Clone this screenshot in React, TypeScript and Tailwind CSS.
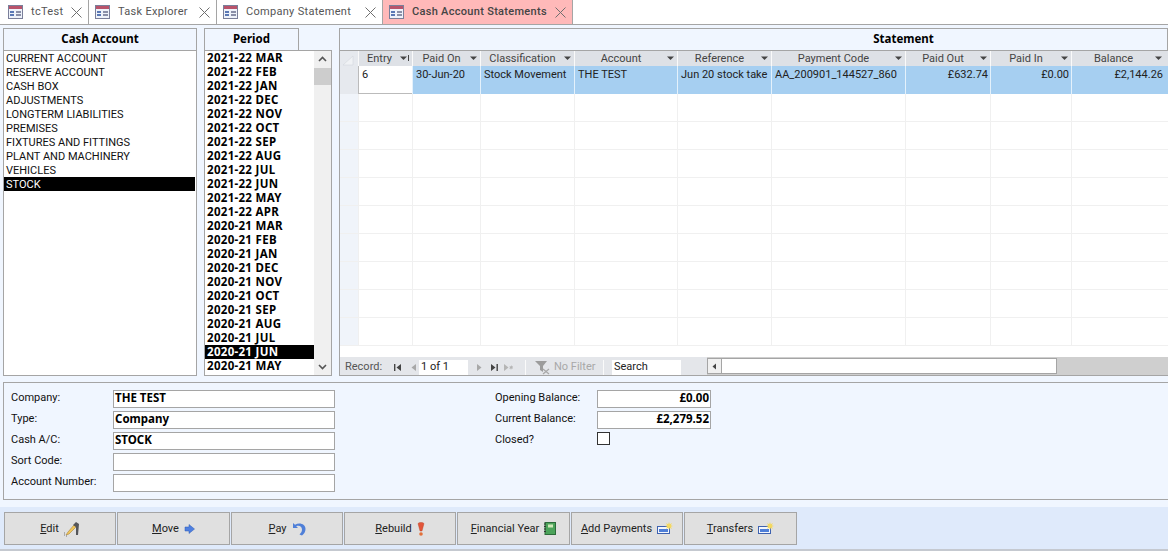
import type { ReactNode } from "react";

const ACCOUNTS = [
  "CURRENT ACCOUNT",
  "RESERVE ACCOUNT",
  "CASH BOX",
  "ADJUSTMENTS",
  "LONGTERM LIABILITIES",
  "PREMISES",
  "FIXTURES AND FITTINGS",
  "PLANT AND MACHINERY",
  "VEHICLES",
  "STOCK",
];

const PERIODS = [
  "2021-22 MAR",
  "2021-22 FEB",
  "2021-22 JAN",
  "2021-22 DEC",
  "2021-22 NOV",
  "2021-22 OCT",
  "2021-22 SEP",
  "2021-22 AUG",
  "2021-22 JUL",
  "2021-22 JUN",
  "2021-22 MAY",
  "2021-22 APR",
  "2020-21 MAR",
  "2020-21 FEB",
  "2020-21 JAN",
  "2020-21 DEC",
  "2020-21 NOV",
  "2020-21 OCT",
  "2020-21 SEP",
  "2020-21 AUG",
  "2020-21 JUL",
  "2020-21 JUN",
  "2020-21 MAY",
];

const COLUMNS = [
  { label: "Entry", width: "w-[54px]", value: "6", align: "pl-[3px]", sort: true },
  { label: "Paid On", width: "w-[68px]", value: "30-Jun-20", align: "pl-[3px]" },
  { label: "Classification", width: "w-[94px]", value: "Stock Movement", align: "pl-[3px]" },
  { label: "Account", width: "w-[103px]", value: "THE TEST", align: "pl-[3px]" },
  { label: "Reference", width: "w-[94px]", value: "Jun 20 stock take", align: "pl-[3px]" },
  { label: "Payment Code", width: "w-[134px]", value: "AA_200901_144527_860", align: "pl-[3px]" },
  { label: "Paid Out", width: "w-[85px]", value: "£632.74", align: "text-right pr-[2px]" },
  { label: "Paid In", width: "w-[81px]", value: "£0.00", align: "text-right pr-[2px]" },
  { label: "Balance", width: "w-[94px]", value: "£2,144.26", align: "text-right pr-[2px]" },
];

const BLANK_ROWS = [0, 1, 2, 3, 4, 5, 6, 7, 8];

function FormIcon() {
  return (
    <svg width="15" height="14" viewBox="0 0 15 14" className="shrink-0">
      <rect x="0.5" y="0.5" width="14" height="13" fill="#eef2fa" stroke="#7a7f9a" />
      <rect x="1" y="1" width="13" height="3" fill="#b9536b" />
      <rect x="2" y="6" width="4" height="2" fill="#5a78b5" />
      <rect x="2" y="9" width="4" height="2" fill="#5a78b5" />
      <rect x="8" y="6" width="5" height="2" fill="#8a8fa8" />
      <rect x="8" y="9" width="5" height="2" fill="#8a8fa8" />
    </svg>
  );
}

function CloseIcon() {
  return (
    <svg width="11" height="11" viewBox="0 0 11 11" className="shrink-0">
      <path d="M0.5 0.5 L10.5 10.5 M10.5 0.5 L0.5 10.5" stroke="#6f6f6f" strokeWidth="1" fill="none" />
    </svg>
  );
}

function Tab({ label, width, active }: { label: string; width: string; active?: boolean }) {
  return (
    <div
      className={`${width} flex h-[24px] items-center border-r border-[#a5a5a5] pl-[6px] text-[11px] tracking-[0.3px] ${
        active ? "bg-[#ffb9b9] font-medium text-[#444]" : "bg-white text-[#555]"
      }`}
    >
      <FormIcon />
      <span className="ml-[8px] flex-1 whitespace-nowrap">{label}</span>
      <span className="mr-[6px]">
        <CloseIcon />
      </span>
    </div>
  );
}

function SectionTitle({ children, className }: { children: ReactNode; className: string }) {
  return (
    <div
      className={`${className} flex h-[22px] items-center justify-center border border-b-0 border-[#a5a5a5] bg-[#f0f6ff] pb-[2px] font-['Noto_Sans'] text-[11.5px] font-bold text-black`}
    >
      {children}
    </div>
  );
}

function DropArrow() {
  return (
    <svg width="7" height="4" viewBox="0 0 7 4" className="shrink-0">
      <path d="M0 0.5 H7 L3.5 4 Z" fill="#444" />
    </svg>
  );
}

function NavGlyph({ d, color = "#444" }: { d: string; color?: string }) {
  return (
    <svg width="9" height="9" viewBox="0 0 9 9" className="shrink-0">
      <path d={d} fill={color} />
    </svg>
  );
}

function EditIcon() {
  return (
    <svg width="16" height="16" viewBox="0 0 16 16">
      <path d="M2 14 L4 11 L10 4 L12 6 L5 13 Z" fill="#f2c65a" stroke="#a8843a" strokeWidth="0.6" />
      <path d="M12 1 L15 3 L14 14 L12 14 L12 6 L9 4 Z" fill="#55565a" />
      <path d="M0 14 h1 M2 15 h1 M0 12 h1" stroke="#777" strokeWidth="1" />
    </svg>
  );
}

function MoveIcon() {
  return (
    <svg width="11" height="10" viewBox="0 0 11 10">
      <path d="M1 3 H5 V0.5 L10.5 5 L5 9.5 V7 H1 Z" fill="#4f7fe0" stroke="#2f5fb5" strokeWidth="0.5" />
    </svg>
  );
}

function PayIcon() {
  return (
    <svg width="14" height="14" viewBox="0 0 14 14">
      <path d="M1 1 L1 6 L6 6 L4.2 4.2 C7 2.8 10 4.5 10 7.5 C10 9.5 9 11 7.5 12.5 L10 13.5 C12.5 11.5 13.5 9.5 13.5 7 C13.5 2.5 8 0 3 2.8 Z" fill="#4f7fd8" />
    </svg>
  );
}

function RebuildIcon() {
  return (
    <svg width="8" height="14" viewBox="0 0 8 14">
      <path d="M1 1.5 C2 0 6 0 7 1.5 L5 9 H3 Z" fill="#e2553a" stroke="#b9401f" strokeWidth="0.4" />
      <circle cx="4" cy="12" r="1.8" fill="#e2703a" />
    </svg>
  );
}

function BookIcon() {
  return (
    <svg width="12" height="13" viewBox="0 0 12 13">
      <rect x="1" y="0.5" width="10.5" height="12" fill="#4ba35a" stroke="#2c6a3a" />
      <rect x="4" y="2.5" width="5" height="3" fill="#cfe8b8" />
      <path d="M0 2 h2 M0 4.5 h2 M0 7 h2 M0 9.5 h2" stroke="#333" strokeWidth="1" />
    </svg>
  );
}

function NewRecordIcon() {
  return (
    <svg width="16" height="13" viewBox="0 0 16 13">
      <rect x="0.5" y="4.5" width="12" height="7" fill="#f4f7fc" stroke="#3e62b0" />
      <rect x="2" y="7" width="9" height="3" fill="#4f7fd8" />
      <path d="M12 0 L12.8 2.2 L15 1 L13.8 3.2 L16 4 L13.8 4.8 L15 7 L12.8 5.8 L12 8 L11.2 5.8 L9 7 L10.2 4.8 L8 4 L10.2 3.2 L9 1 L11.2 2.2 Z" fill="#f5d95e" />
    </svg>
  );
}

function ActionButton({ width, children, icon }: { width: string; children: ReactNode; icon: ReactNode }) {
  return (
    <div
      className={`${width} flex h-[33px] items-center justify-center gap-[5px] border border-[#a5a5a5] bg-[#e0e0e0] text-[11px] text-[#222]`}
    >
      <span className="whitespace-nowrap pt-[1px]">{children}</span>
      {icon}
    </div>
  );
}

function Field({ label, value, right }: { label: string; value?: string; right?: boolean }) {
  return (
    <div className="flex h-[18px] items-center">
      <span className="-mt-[2px] w-[102px] whitespace-nowrap text-[11px] text-[#111]">{label}</span>
      <span
        className={`${right ? "w-[114px] justify-end pr-[1px]" : "w-[222px] pl-[1px]"} flex h-[18px] items-center border border-[#a5a5a5] bg-white pb-[2px] font-['Noto_Sans'] text-[11.5px] font-bold leading-[14px] text-black`}
      >
        {value}
      </span>
    </div>
  );
}

export default function App() {
  return (
    <div className="flex h-[551px] w-[1168px] flex-col overflow-hidden bg-[#f0f6ff] font-['Roboto',sans-serif]">
      {/* document tabs */}
      <div className="flex h-[25px] shrink-0 items-end border-b border-[#a5a5a5] bg-white pl-[2px]">
        <div className="flex border-t border-[#a5a5a5]">
          <Tab label="tcTest" width="w-[87px]" />
          <Tab label="Task Explorer" width="w-[128px]" />
          <Tab label="Company Statement" width="w-[166px]" />
          <Tab label="Cash Account Statements" width="w-[190px]" active />
        </div>
      </div>

      <div className="flex h-[351px] shrink-0 gap-[7px] pl-[3px] pt-[3px]">
        {/* cash accounts */}
        <div className="flex w-[194px] flex-col">
          <SectionTitle className="w-full">Cash Account</SectionTitle>
          <div className="h-[327px] border border-[#a5a5a5] bg-white text-[11px] leading-[14px] text-[#111]">
            {ACCOUNTS.map((name) => (
              <div
                key={name}
                className={`mr-[1px] h-[14px] whitespace-nowrap pl-[2px] leading-[16px] ${name === "STOCK" ? "bg-black text-white" : ""}`}
              >
                {name}
              </div>
            ))}
          </div>
        </div>

        {/* periods */}
        <div className="flex w-[128px] flex-col">
          <SectionTitle className="w-[95px]">Period</SectionTitle>
          <div className="flex h-[327px] border border-[#a5a5a5] bg-white">
            <div className="flex-1 font-['Noto_Sans'] text-[11.5px] font-bold tracking-[0.3px] text-black">
              {PERIODS.map((name) => (
                <div
                  key={name}
                  className={`h-[14px] whitespace-nowrap pl-[2px] leading-[14px] ${name === "2020-21 JUN" ? "bg-black text-white" : ""}`}
                >
                  {name}
                </div>
              ))}
            </div>
            <div className="flex w-[17px] flex-col bg-[#f0f0f0]">
              <div className="flex h-[17px] items-center justify-center">
                <svg width="9" height="6" viewBox="0 0 9 6">
                  <path d="M1 5 L4.5 1.5 L8 5" stroke="#555" strokeWidth="1.6" fill="none" />
                </svg>
              </div>
              <div className="h-[17px] bg-[#cdcdcd]" />
              <div className="flex-1" />
              <div className="flex h-[17px] items-center justify-center">
                <svg width="9" height="6" viewBox="0 0 9 6">
                  <path d="M1 1 L4.5 4.5 L8 1" stroke="#555" strokeWidth="1.6" fill="none" />
                </svg>
              </div>
            </div>
          </div>
        </div>

        {/* statement datasheet */}
        <div className="flex w-[829px] flex-col">
          <SectionTitle className="w-full pl-[300px]">Statement</SectionTitle>
          <div className="flex h-[327px] flex-col border-y border-l border-[#a5a5a5] bg-white">
            <div className="flex h-[15px] shrink-0 bg-[#dee1e6] text-[11px] leading-[15px] text-[#444]">
              <div className="flex w-[18px] items-end bg-[#e6e9ee]">
                <svg width="16" height="13" viewBox="0 0 16 13">
                  <path d="M3 12 L13 3 V12 Z" fill="#f0f2f5" stroke="#cfd3d9" strokeWidth="0.5" />
                </svg>
              </div>
              {COLUMNS.map((col) => (
                <div
                  key={col.label}
                  className={`${col.width} flex items-center border-l border-[#fafafa] pr-[3px]`}
                >
                  <span className="flex-1 text-center">{col.label}</span>
                  {col.sort ? (
                    <span className="flex items-center gap-[1px]">
                      <DropArrow />
                      <span className="h-[6px] w-[1px] bg-[#444]" />
                    </span>
                  ) : (
                    <DropArrow />
                  )}
                </div>
              ))}
            </div>

            <div className="flex h-[28px] shrink-0 bg-[#a6cff1] text-[11px] leading-[15px] text-[#222]">
              <div className="w-[18px] bg-[#e6e9ee]" />
              {COLUMNS.map((col, i) => (
                <div
                  key={col.label}
                  className={`${col.width} ${col.align} whitespace-nowrap border-l pt-[1px] ${
                    i === 0 ? "border-b border-[#bbb] bg-white" : "border-white/70"
                  }`}
                >
                  {col.value}
                </div>
              ))}
            </div>

            <div className="flex-1 overflow-hidden">
              {BLANK_ROWS.map((row) => (
                <div key={row} className="flex h-[28px] border-b border-[#f0f0f0]">
                  <div className="w-[18px] bg-[#f0f4fa]" />
                  {COLUMNS.map((col) => (
                    <div key={col.label} className={`${col.width} border-l border-[#f0f0f0]`} />
                  ))}
                </div>
              ))}
            </div>

            {/* record navigation */}
            <div className="flex h-[18px] shrink-0 items-center bg-[#cfcfcf] text-[11px] text-[#555]">
              <div className="flex h-full w-[367px] items-center bg-[#e4e6ea] pl-[5px] pt-[3px]">
                <span className="w-[48px] whitespace-nowrap">Record:</span>
                <NavGlyph d="M1 1 h1.4 v7 h-1.4 Z M8 1 v7 L3.5 4.5 Z" />
                <span className="ml-[7px]">
                  <NavGlyph d="M7 1 v7 L2.5 4.5 Z" color="#a8a8a8" />
                </span>
                <span className="ml-[1px] flex h-[15px] w-[49px] items-center bg-white pl-[2px] text-[#222]">1 of 1</span>
                <span className="ml-[7px]">
                  <NavGlyph d="M2 1 v7 L6.5 4.5 Z" color="#a8a8a8" />
                </span>
                <span className="ml-[6px]">
                  <NavGlyph d="M1 1 v7 L5.5 4.5 Z M6.5 1 h1.4 v7 h-1.4 Z" />
                </span>
                <span className="ml-[5px]">
                  <NavGlyph d="M0 1 v7 L4.5 4.5 Z M7 2 l1 1.5 l1 -0.5 l-0.5 1.5 l0.5 1 l-1.5 0 l-0.5 1.5 l-0.5 -1.5 l-1.5 0 l1 -1 l-0.5 -1.5 l1.5 0.5 Z" color="#b5b5b5" />
                </span>
                <span className="ml-[12px] flex h-full w-[79px] items-center border-x border-[#fafafa] pl-[9px] text-[#a8a8a8]">
                  <svg width="16" height="15" viewBox="0 0 16 15" className="mr-[3px] shrink-0">
                    <path d="M0 1 H12 L8 6 V12 L5 10 V6 Z" fill="#9c9c9c" />
                    <path d="M8 9 L14 14 M14 9 L8 14" stroke="#a8a8a8" strokeWidth="1.2" />
                  </svg>
                  <span className="whitespace-nowrap">No Filter</span>
                </span>
                <span className="ml-[8px] flex h-[15px] w-[69px] items-center bg-white pl-[2px] text-[#222]">Search</span>
              </div>
              <div className="flex h-[16px] w-[350px] items-center border border-[#a5a5a5] bg-white">
                <div className="flex h-full w-[14px] items-center justify-center border-r border-[#a5a5a5] bg-[#f0f0f0]">
                  <NavGlyph d="M6 1.5 v6 L2.5 4.5 Z" />
                </div>
              </div>
            </div>
          </div>
        </div>
      </div>

      {/* account details */}
      <div className="ml-[3px] mt-[6px] flex h-[118px] shrink-0 border-y border-l border-[#a5a5a5] pl-[7px] pt-[7px]">
        <div className="flex w-[484px] flex-col gap-[3px]">
          <Field label="Company:" value="THE TEST" />
          <Field label="Type:" value="Company" />
          <Field label="Cash A/C:" value="STOCK" />
          <Field label="Sort Code:" />
          <Field label="Account Number:" />
        </div>
        <div className="flex flex-col gap-[3px]">
          <Field label="Opening Balance:" value="£0.00" right />
          <Field label="Current Balance:" value="£2,279.52" right />
          <div className="flex h-[18px] items-start">
            <span className="w-[102px] whitespace-nowrap text-[11px] leading-[15px] text-[#111]">Closed?</span>
            <span className="h-[13px] w-[13px] border border-[#333] bg-white" />
          </div>
        </div>
      </div>

      {/* action buttons */}
      <div className="mt-[7px] flex flex-1 gap-[1px] border-b-2 border-[#c5c9d0] bg-[#dfeafb] pl-[4px] pt-[5px]">
        <ActionButton width="w-[112px]" icon={<EditIcon />}>
          <u>E</u>dit
        </ActionButton>
        <ActionButton width="w-[113px]" icon={<MoveIcon />}>
          <u>M</u>ove
        </ActionButton>
        <ActionButton width="w-[112px]" icon={<PayIcon />}>
          <u>P</u>ay
        </ActionButton>
        <ActionButton width="w-[112px]" icon={<RebuildIcon />}>
          <u>R</u>ebuild
        </ActionButton>
        <ActionButton width="w-[113px]" icon={<BookIcon />}>
          <u>F</u>inancial Year
        </ActionButton>
        <ActionButton width="w-[112px]" icon={<NewRecordIcon />}>
          <u>A</u>dd Payments
        </ActionButton>
        <ActionButton width="w-[113px]" icon={<NewRecordIcon />}>
          <u>T</u>ransfers
        </ActionButton>
      </div>
    </div>
  );
}
